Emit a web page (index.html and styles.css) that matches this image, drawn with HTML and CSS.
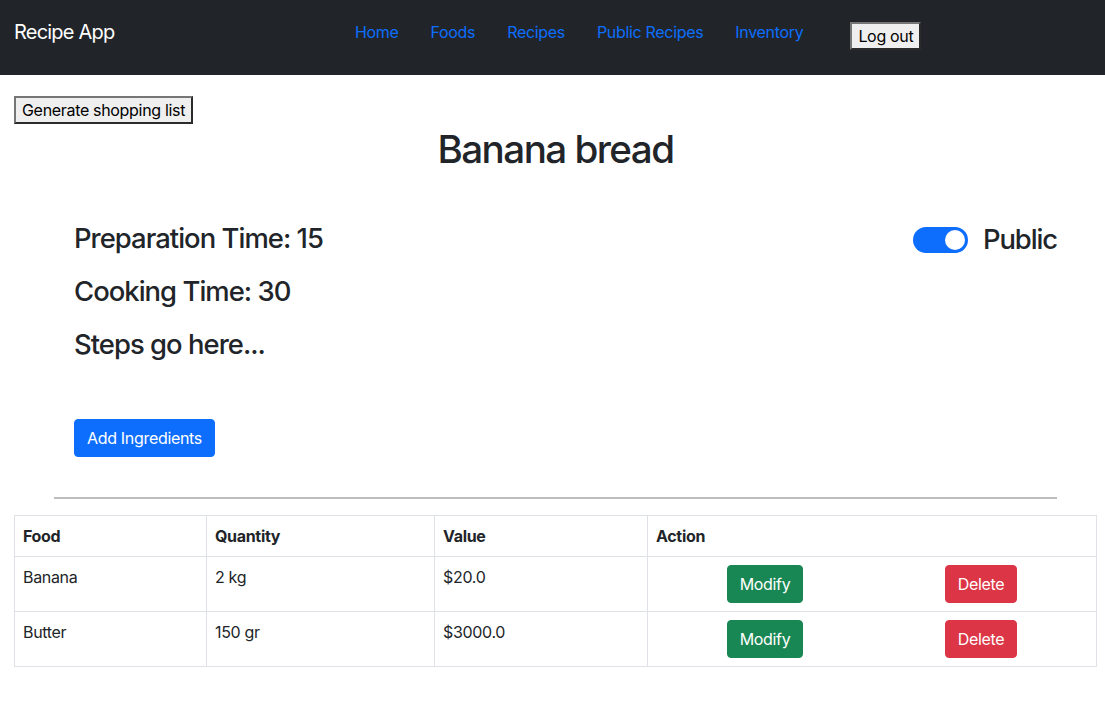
FILE: index.html
```html
<!DOCTYPE html>
<html lang="en">
<head>
<meta charset="utf-8">
<title>Recipe App</title>
<link rel="stylesheet" href="styles.css">
</head>
<body>
<header class="navbar">
  <a class="brand" href="#">Recipe App</a>
  <nav class="nav">
    <a class="nav-link" href="#">Home</a>
    <a class="nav-link" href="#">Foods</a>
    <a class="nav-link" href="#">Recipes</a>
    <a class="nav-link" href="#">Public Recipes</a>
    <a class="nav-link" href="#">Inventory</a>
  </nav>
  <button class="plain-btn logout">Log out</button>
</header>
<main class="page">
  <button class="plain-btn">Generate shopping list</button>
  <h1 class="title">Banana bread</h1>
  <section class="details">
    <div class="info">
      <h3 class="info-line">Preparation Time: 15</h3>
      <h3 class="info-line">Cooking Time: 30</h3>
      <h3 class="info-line">Steps go here...</h3>
    </div>
    <label class="switch-wrap">
      <span class="switch"><span class="knob"></span></span>
      <span class="switch-label">Public</span>
    </label>
  </section>
  <div class="add-row">
    <button class="btn btn-primary btn-add">Add Ingredients</button>
  </div>
  <hr class="divider">
  <table class="table">
    <thead>
      <tr>
        <th class="c-food">Food</th>
        <th class="c-qty">Quantity</th>
        <th class="c-val">Value</th>
        <th class="c-act">Action</th>
      </tr>
    </thead>
    <tbody>
      <tr>
        <td>Banana</td>
        <td>2 kg</td>
        <td>$20.0</td>
        <td><div class="actions"><button class="btn btn-success">Modify</button><button class="btn btn-danger">Delete</button></div></td>
      </tr>
      <tr>
        <td>Butter</td>
        <td>150 gr</td>
        <td>$3000.0</td>
        <td><div class="actions"><button class="btn btn-success">Modify</button><button class="btn btn-danger">Delete</button></div></td>
      </tr>
    </tbody>
  </table>
</main>
</body>
</html>
```

FILE: styles.css
```css
* { box-sizing: border-box; }
body {
  margin: 0;
  font-family: "Inter", "Liberation Sans", sans-serif;
  font-size: 16px;
  line-height: 1.5;
  color: #212529;
  background: #fff;
  letter-spacing: -0.02em;
}
.navbar {
  height: 75px;
  background: #212529;
  display: flex;
  align-items: center;
  padding: 0 14px;
}
.brand {
  color: #fff;
  text-decoration: none;
  font-size: 20px;
  line-height: 30px;
  letter-spacing: -0.04em;
  margin-top: -11px;
  width: 341px;
}
.nav {
  display: flex;
  gap: 32px;
  margin-top: -11px;
}
.nav-link {
  color: #0d6efd;
  text-decoration: none;
  font-size: 16px;
  line-height: 24px;
}
.plain-btn {
  font-family: "Inter", "Liberation Sans", sans-serif;
  font-size: 16px;
  line-height: 20px;
  letter-spacing: -0.02em;
  color: #000;
  background: #efefef;
  border: 2px solid;
  border-color: #767676 #2b2b2b #2b2b2b #767676;
  padding: 2px 6px;
  height: 28px;
  border-radius: 0;
}
.logout {
  margin-left: 47px;
  margin-top: -4px;
}
.page {
  padding: 21px 8px 40px 14px;
}
.title {
  text-align: center;
  font-size: 38.6px;
  font-weight: 500;
  line-height: 1.2;
  letter-spacing: -0.04em;
  margin: 2px 0 0;
}
.details {
  display: flex;
  justify-content: space-between;
  align-items: flex-start;
  margin: 50px 40px 0 60px;
}
.info-line {
  font-size: 27.4px;
  font-weight: 500;
  line-height: 33px;
  letter-spacing: -0.035em;
  margin: 0 0 20px;
}
.switch-wrap {
  display: flex;
  align-items: center;
  gap: 15px;
  margin-top: 1px;
}
.switch {
  width: 55px;
  height: 26px;
  border-radius: 13px;
  background: #0d6efd;
  display: flex;
  align-items: center;
  justify-content: flex-end;
  padding-right: 3px;
}
.knob {
  width: 20px;
  height: 20px;
  border-radius: 50%;
  background: #fff;
}
.switch-label {
  font-size: 27.4px;
  font-weight: 500;
  line-height: 33px;
  letter-spacing: -0.04em;
}
.add-row {
  margin: 38px 0 0 60px;
}
.btn {
  font-family: "Inter", "Liberation Sans", sans-serif;
  font-size: 16px;
  line-height: 24px;
  letter-spacing: -0.02em;
  padding: 6px 12px;
  border: 1px solid transparent;
  border-radius: 4px;
  color: #fff;
  cursor: pointer;
}
.btn-primary { background: #0d6efd; border-color: #0d6efd; }
.btn-success { background: #198754; border-color: #198754; }
.btn-danger { background: #dc3545; border-color: #dc3545; }
.divider {
  margin: 40px 40px 0 40px;
  border: 0;
  border-top: 2px solid #bdbdbd;
  height: 0;
}
.table {
  margin-top: 16px;
  width: 100%;
  border-collapse: collapse;
  border: 1px solid #dee2e6;
}
.table th, .table td {
  border: 1px solid #dee2e6;
  padding: 8px;
  text-align: left;
  vertical-align: top;
  line-height: 24px;
}
.table th { font-weight: 700; }
.c-food { width: 192px; }
.c-qty { width: 228px; }
.c-val { width: 213px; }
.actions {
  display: flex;
  justify-content: space-around;
}
```
